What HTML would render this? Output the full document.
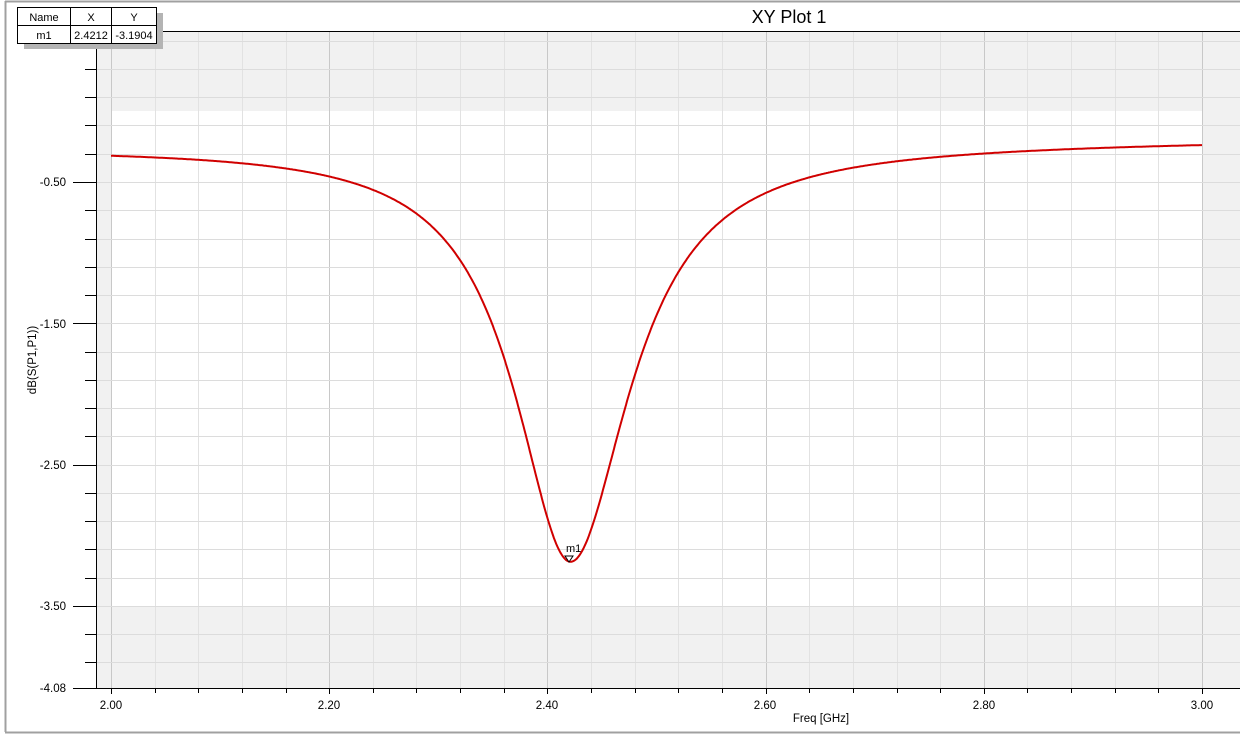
<!DOCTYPE html>
<html><head><meta charset="utf-8"><style>
body{margin:0;background:#fff;width:1240px;height:736px;overflow:hidden;font-family:"Liberation Sans",Arial,sans-serif}
svg text{font-family:"Liberation Sans",Arial,sans-serif}
</style></head><body>
<svg id="s" width="1240" height="736" xmlns="http://www.w3.org/2000/svg">
<rect x="0" y="0" width="1240" height="736" fill="#fff"/>
<line x1="5" y1="1.5" x2="1240" y2="1.5" stroke="#a0a0a0" stroke-width="2"/>
<line x1="5.5" y1="1" x2="5.5" y2="732" stroke="#a0a0a0" stroke-width="2"/>
<line x1="5" y1="732.5" x2="1240" y2="732.5" stroke="#a0a0a0" stroke-width="2"/>
<text x="789" y="23" font-size="18" text-anchor="middle" fill="#000">XY Plot 1</text>
<g id="bg">
<rect x="97" y="31" width="1143" height="657" fill="#fff"/>
<rect x="97" y="31" width="1143" height="80" fill="#f1f1f1"/>
<rect x="97" y="606" width="1143" height="82" fill="#f1f1f1"/>
<rect x="97" y="31" width="14" height="657" fill="#f1f1f1"/>
<rect x="1202" y="31" width="38" height="657" fill="#f1f1f1"/>
</g>
<g id="grid"></g>
<line x1="97" y1="31.5" x2="1240" y2="31.5" stroke="#000"/>
<line x1="96.5" y1="31" x2="96.5" y2="689" stroke="#000"/>
<line x1="73" y1="688.5" x2="1240" y2="688.5" stroke="#000"/>
<g id="ticks" stroke="#000"></g>
<g font-size="11.5" fill="#000" text-anchor="end">
<text x="66" y="186">-0.50</text>
<text x="66" y="328">-1.50</text>
<text x="66" y="469">-2.50</text>
<text x="66" y="610">-3.50</text>
<text x="66" y="692">-4.08</text>
</g>
<g font-size="11.5" fill="#000" text-anchor="middle">
<text x="111" y="709">2.00</text>
<text x="329" y="709">2.20</text>
<text x="547" y="709">2.40</text>
<text x="765" y="709">2.60</text>
<text x="984" y="709">2.80</text>
<text x="1202" y="709">3.00</text>
<text x="821" y="722">Freq [GHz]</text>
</g>
<text transform="translate(36,360) rotate(-90)" font-size="11.5" text-anchor="middle">dB(S(P1,P1))</text>
<path id="curve" d="" fill="none" stroke="#d00000" stroke-width="2"/>
<path d="M565,556 L573,556 L569,562 Z" fill="#fff" stroke="#000" stroke-width="1"/>
<text x="566" y="552" font-size="11">m1</text>
<rect x="24" y="13" width="139" height="36" fill="#b4b4b4"/>
<rect x="17.5" y="7.5" width="139" height="36" fill="#fff" stroke="#000"/>
<line x1="17" y1="25.5" x2="157" y2="25.5" stroke="#000"/>
<line x1="70.5" y1="7" x2="70.5" y2="44" stroke="#000"/>
<line x1="111.5" y1="7" x2="111.5" y2="44" stroke="#000"/>
<g font-size="11" text-anchor="middle">
<text x="44" y="21">Name</text><text x="91" y="21">X</text><text x="134" y="21">Y</text>
<text x="44" y="39">m1</text><text x="91" y="39">2.4212</text><text x="134" y="39">-3.1904</text>
</g>
</svg>
<script>
var NS="http://www.w3.org/2000/svg";
function ln(p,x1,y1,x2,y2,c){var l=document.createElementNS(NS,"line");l.setAttribute("x1",x1);l.setAttribute("y1",y1);l.setAttribute("x2",x2);l.setAttribute("y2",y2);if(c)l.setAttribute("stroke",c);document.getElementById(p).appendChild(l);}
var X=function(f){return 111+(f-2)*1091;};
var Y=function(d){return 182+(-0.5-d)*141.3;};
for(var i=0;i<=25;i++){var x=Math.round(X(2+i*0.04))+0.5;ln("grid",x,32,x,688,i%5==0?"#c8c8c8":"#e2e2e2");ln("ticks",x,688,x,i%5==0?694:693);}
for(var j=-6;j<=20;j++){var dd=-0.5-j*0.2;var y=Math.round(Y(dd))+0.5;if(y<36||y>686)continue;ln("grid",97,y,1240,y,"#dcdcdc");}
for(var j=-6;j<=17;j++){var dd=-0.5-j*0.2;var y=Math.round(Y(dd))+0.5;if(y<40||y>686)continue;var r=(((dd+0.5)%1)+1)%1;var major=r<0.01||r>0.99;ln("ticks",major?73:85,y,97,y);}
ln("ticks",73,688.5,97,688.5);
var p="";for(var n=0;n<=1000;n++){var f=2+n/1000;var b=Math.pow(10,(-0.25+0.05*(f-2))/10);var m=0.48;var w=f<2.4212?0.074:0.078;var x=(f-2.4212)/w;var L=b-(b-m)/(1+x*x);var db=10*Math.log10(L);p+=(n?"L":"M")+X(f).toFixed(1)+","+Y(db).toFixed(1);}
document.getElementById("curve").setAttribute("d",p);
</script>
</body></html>
